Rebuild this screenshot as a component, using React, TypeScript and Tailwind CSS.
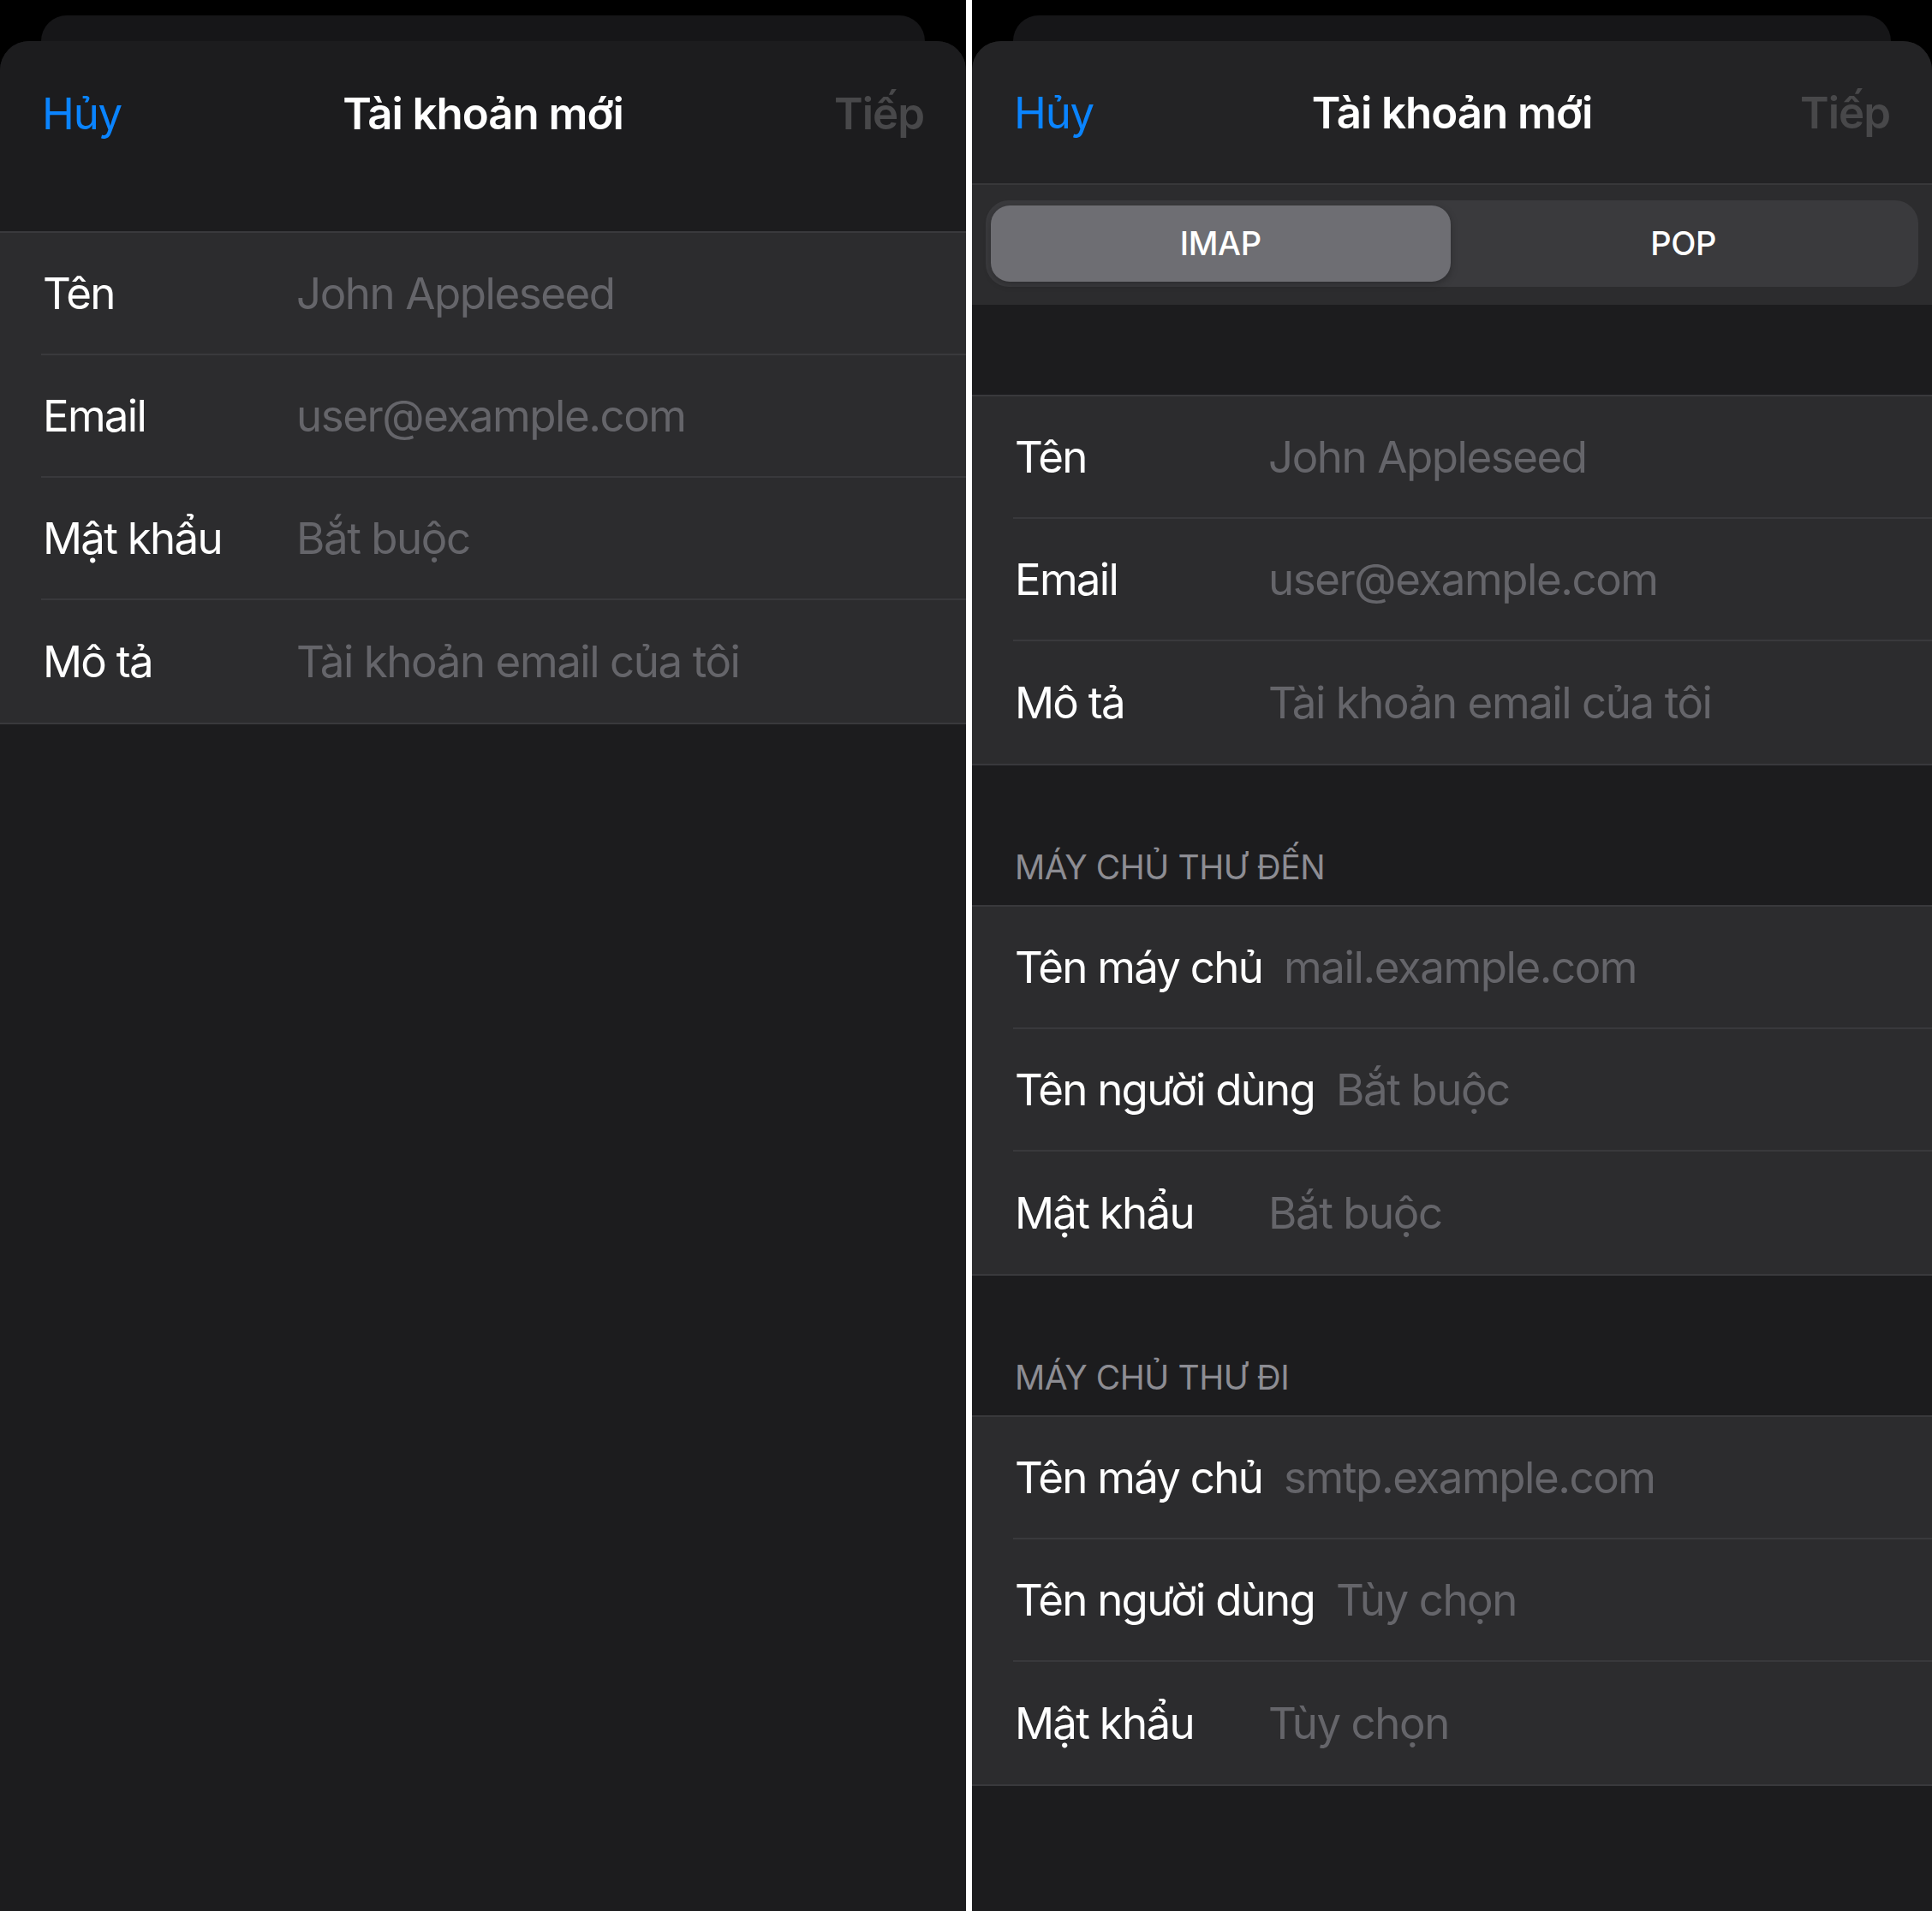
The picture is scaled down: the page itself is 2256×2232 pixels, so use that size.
import React from "react";

type Row = { label: string; value: string };

function Group({ rows }: { rows: Row[] }) {
  return (
    <div className="border-y-2 border-[#39393c] bg-[#2c2c2e]">
      {rows.map((r, i) => (
        <div key={i} className="flex h-[143px] pl-[48px]">
          <div
            className={
              "flex flex-1 items-center " +
              (i < rows.length - 1 ? "border-b-2 border-[#39393c]" : "")
            }
          >
            <div className="min-w-[298px] pr-[25px] pl-[2px] text-[51px] leading-none tracking-[-0.034em] text-white whitespace-nowrap">
              {r.label}
            </div>
            <div className="text-[51px] leading-none tracking-[-0.028em] text-[#65656a] whitespace-nowrap">
              {r.value}
            </div>
          </div>
        </div>
      ))}
    </div>
  );
}

function Header({ title }: { title: string }) {
  return (
    <div className="flex h-[163px] items-end pb-[21px] pl-[50px] text-[39px] leading-[47px] tracking-[-0.012em] text-[#8d8d93]">
      {title}
    </div>
  );
}

function NavBar({ scrolled }: { scrolled: boolean }) {
  return (
    <div
      className={
        "grid h-[168px] grid-cols-[1fr_auto_1fr] items-center px-[49px] " +
        (scrolled ? "border-b-2 border-[#38383a] bg-[#232325]" : "bg-[#1c1c1e]")
      }
    >
      <div className="text-[51px] leading-none tracking-[-0.025em] text-[#0a84ff]">Hủy</div>
      <div className="text-[51px] font-semibold leading-none tracking-[-0.02em] text-white">
        Tài khoản mới
      </div>
      <div className="text-right text-[51px] font-semibold leading-none tracking-[-0.02em] text-[#48484a]">
        Tiếp
      </div>
    </div>
  );
}

function Panel({ children }: { children: React.ReactNode }) {
  return (
    <div className="flex min-w-0 flex-1 flex-col bg-black pt-[18px]">
      <div className="mx-[48px] h-[30px] shrink-0 rounded-t-[30px] bg-[#161618]" />
      <div className="flex flex-1 flex-col overflow-hidden rounded-t-[34px] bg-[#1c1c1e]">
        {children}
      </div>
    </div>
  );
}

export default function App() {
  return (
    <div className="flex h-[2232px] w-[2256px] overflow-hidden bg-black font-['Inter','Noto_Sans',sans-serif] antialiased">
      <div className="flex w-[1128px] shrink-0">
        <Panel>
          <NavBar scrolled={false} />
          <div className="h-[54px]" />
          <Group
            rows={[
              { label: "Tên", value: "John Appleseed" },
              { label: "Email", value: "user@example.com" },
              { label: "Mật khẩu", value: "Bắt buộc" },
              { label: "Mô tả", value: "Tài khoản email của tôi" },
            ]}
          />
        </Panel>
      </div>
      <div className="w-[7px] shrink-0 bg-white" />
      <div className="flex flex-1">
        <Panel>
          <NavBar scrolled={true} />
          <div className="h-[140px] bg-[#2c2c2e] px-[16px] pt-[18px]">
            <div className="grid h-[101px] grid-cols-2 gap-[4px] rounded-[27px] bg-[#3a3a3d] p-[6px]">
              <div className="flex items-center justify-center rounded-[22px] bg-[#6e6e73] text-[38px] font-medium tracking-[-0.01em] text-white shadow-[0_3px_8px_rgba(0,0,0,0.25)]">
                IMAP
              </div>
              <div className="flex items-center justify-center text-[38px] font-medium tracking-[-0.01em] text-white">
                POP
              </div>
            </div>
          </div>
          <div className="h-[105px]" />
          <Group
            rows={[
              { label: "Tên", value: "John Appleseed" },
              { label: "Email", value: "user@example.com" },
              { label: "Mô tả", value: "Tài khoản email của tôi" },
            ]}
          />
          <Header title="MÁY CHỦ THƯ ĐẾN" />
          <Group
            rows={[
              { label: "Tên máy chủ", value: "mail.example.com" },
              { label: "Tên người dùng", value: "Bắt buộc" },
              { label: "Mật khẩu", value: "Bắt buộc" },
            ]}
          />
          <Header title="MÁY CHỦ THƯ ĐI" />
          <Group
            rows={[
              { label: "Tên máy chủ", value: "smtp.example.com" },
              { label: "Tên người dùng", value: "Tùy chọn" },
              { label: "Mật khẩu", value: "Tùy chọn" },
            ]}
          />
        </Panel>
      </div>
    </div>
  );
}
